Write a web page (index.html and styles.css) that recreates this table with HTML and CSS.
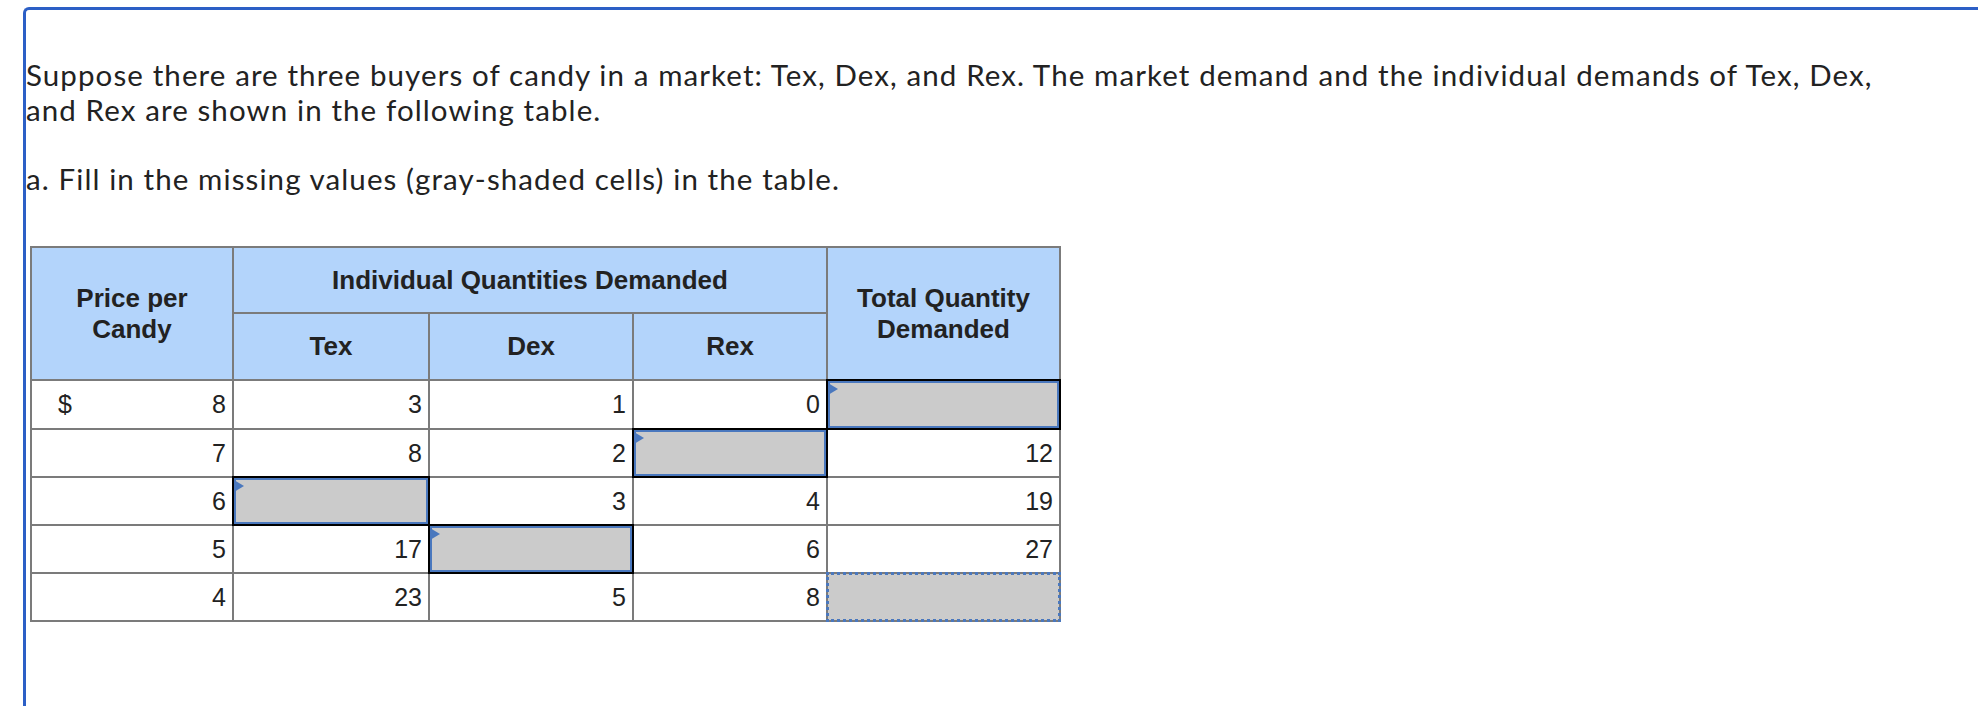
FILE: index.html
```html
<!DOCTYPE html>
<html lang="en">
<head>
<meta charset="utf-8">
<title>Candy demand</title>
<link rel="stylesheet" href="styles.css">
</head>
<body>
<div class="frame">
  <p class="prompt">Suppose there are three buyers of candy in a market: Tex, Dex, and Rex. The market demand and the individual demands of Tex, Dex, and Rex are shown in the following table.</p>
  <p class="prompt">a. Fill in the missing values (gray-shaded cells) in the table.</p>

  <div class="grid">
    <div class="hd price-hd">Price per<br>Candy</div>
    <div class="hd ind-hd">Individual Quantities Demanded</div>
    <div class="hd total-hd">Total Quantity<br>Demanded</div>
    <div class="hd">Tex</div>
    <div class="hd">Dex</div>
    <div class="hd">Rex</div>

    <div class="cell price"><span>$</span><span>8</span></div>
    <div class="cell">3</div>
    <div class="cell">1</div>
    <div class="cell">0</div>
    <div class="cell input"><span class="flag"></span></div>

    <div class="cell price"><span></span><span>7</span></div>
    <div class="cell">8</div>
    <div class="cell">2</div>
    <div class="cell input"><span class="flag"></span></div>
    <div class="cell">12</div>

    <div class="cell price"><span></span><span>6</span></div>
    <div class="cell input"><span class="flag"></span></div>
    <div class="cell">3</div>
    <div class="cell">4</div>
    <div class="cell">19</div>

    <div class="cell price"><span></span><span>5</span></div>
    <div class="cell">17</div>
    <div class="cell input"><span class="flag"></span></div>
    <div class="cell">6</div>
    <div class="cell">27</div>

    <div class="cell price"><span></span><span>4</span></div>
    <div class="cell">23</div>
    <div class="cell">5</div>
    <div class="cell">8</div>
    <div class="cell focus"></div>
  </div>
</div>
</body>
</html>
```

FILE: styles.css
```css
html, body {
  margin: 0;
  padding: 0;
  background: #ffffff;
}

body {
  overflow: hidden;
}

.frame {
  margin: 7px 0 0 23px;
  border-top: 3px solid #2c5fc6;
  border-left: 3px solid #2c5fc6;
  border-top-left-radius: 6px;
  min-height: 720px;
  padding-top: 47px;
  box-sizing: border-box;
}

.prompt {
  margin: 0;
  width: 1895px;
  font-family: Lato, "Open Sans", sans-serif;
  font-size: 29.5px;
  letter-spacing: 1.1px;
  line-height: 35px;
  color: #222222;
}

.prompt + .prompt {
  margin-top: 34px;
}

.grid {
  display: grid;
  width: max-content;
  margin: 50px 0 0 4px;
  grid-template-columns: 200px 194px 202px 192px 231px;
  grid-template-rows: 64px 65px 47px 46px 46px 46px 46px;
  gap: 2px;
  padding: 2px;
  background: #7b7b7b;
  font-family: "Liberation Sans", Arial, sans-serif;
  color: #222222;
}

.hd {
  display: flex;
  align-items: center;
  justify-content: center;
  text-align: center;
  background: #b3d4fb;
  font-weight: bold;
  font-size: 26px;
  line-height: 31px;
}

.price-hd {
  grid-row: 1 / span 2;
  grid-column: 1;
}

.ind-hd {
  grid-row: 1;
  grid-column: 2 / span 3;
}

.total-hd {
  grid-row: 1 / span 2;
  grid-column: 5;
}

.cell {
  display: flex;
  align-items: center;
  justify-content: flex-end;
  padding: 0 6px 0 0;
  background: #ffffff;
  font-size: 25px;
}

.cell.price {
  justify-content: space-between;
  padding-left: 26px;
}

.cell.input {
  position: relative;
  background: #cbcbcb;
  border: 2px solid #4a78be;
  outline: 2px solid #000000;
}

.flag {
  position: absolute;
  left: -2px;
  top: 0;
  width: 0;
  height: 0;
  border-left: 10px solid #4a78be;
  border-top: 6px solid transparent;
  border-bottom: 6px solid transparent;
}

.cell.focus {
  background: #cbcbcb;
  outline: 3px dotted #4a78be;
  outline-offset: -1px;
}
```
